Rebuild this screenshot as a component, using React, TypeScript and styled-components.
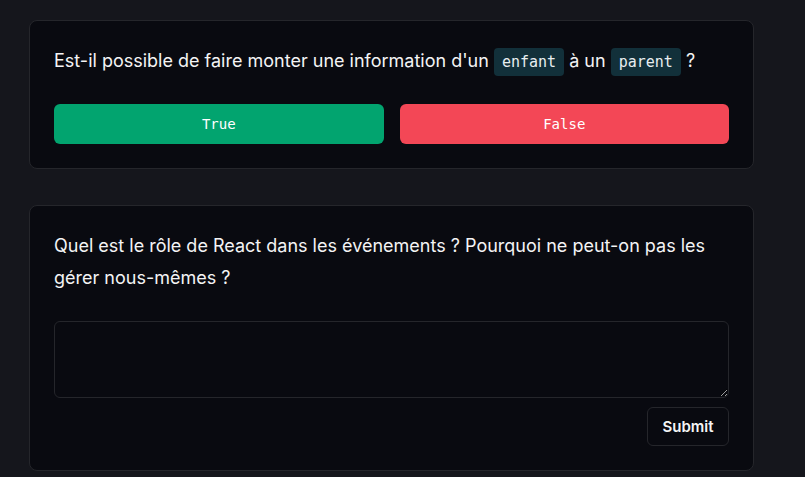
import React from "react";
import styled, { createGlobalStyle } from "styled-components";

const Global = createGlobalStyle`
  html, body { margin: 0; padding: 0; background: #15161c; }
  body { font-family: Inter, "Noto Sans", sans-serif; color: #f4f4f5; }
  * { box-sizing: border-box; }
`;

const Page = styled.div`
  display: flex;
  flex-direction: column;
  gap: 36px;
  padding: 20px 0 0 29px;
  width: 754px;
`;

const Card = styled.section`
  background: #090a10;
  border: 1px solid #25262b;
  border-radius: 8px;
  padding: 24px;
  display: flex;
  flex-direction: column;
`;

const Question = styled.p`
  margin: 0 0 27px;
  font-size: 18px;
  line-height: 32px;
  color: #f4f4f5;
`;

const Code = styled.code`
  font-family: "DejaVu Sans Mono", "Liberation Mono", monospace;
  font-size: 15px;
  line-height: 1;
  background: #12303a;
  color: #e8eef0;
  border-radius: 4px;
  padding: 5px 8px;
`;

const Choices = styled.div`
  display: grid;
  grid-template-columns: 1fr 1fr;
  gap: 16px;
`;

const Choice = styled.button<{ $tone: "ok" | "ko" }>`
  height: 40px;
  border: none;
  border-radius: 6px;
  background: ${(p) => (p.$tone === "ok" ? "#02a46f" : "#f34756")};
  color: #ffffff;
  font-family: "DejaVu Sans Mono", "Liberation Mono", monospace;
  font-size: 14px;
  cursor: pointer;
`;

const Answer = styled.textarea`
  height: 77px;
  background: #090a10;
  border: 1px solid #25262b;
  border-radius: 6px;
  color: #f4f4f5;
  font-family: Inter, sans-serif;
  font-size: 14px;
  padding: 8px 12px;
`;

const Actions = styled.div`
  display: flex;
  justify-content: flex-end;
  margin-top: 9px;
`;

const Submit = styled.button`
  height: 39px;
  width: 82px;
  background: #090a10;
  border: 1px solid #25262b;
  border-radius: 6px;
  color: #f4f4f5;
  font-family: Inter, sans-serif;
  font-weight: 600;
  font-size: 15px;
  cursor: pointer;
`;

export default function App() {
  return (
    <>
      <Global />
      <Page>
        <Card>
          <Question>
            Est-il possible de faire monter une information d'un <Code>enfant</Code> à un{" "}
            <Code>parent</Code> ?
          </Question>
          <Choices>
            <Choice $tone="ok">True</Choice>
            <Choice $tone="ko">False</Choice>
          </Choices>
        </Card>
        <Card>
          <Question>
            Quel est le rôle de React dans les événements ? Pourquoi ne peut-on pas les gérer
            nous-mêmes ?
          </Question>
          <Answer />
          <Actions>
            <Submit>Submit</Submit>
          </Actions>
        </Card>
      </Page>
    </>
  );
}
